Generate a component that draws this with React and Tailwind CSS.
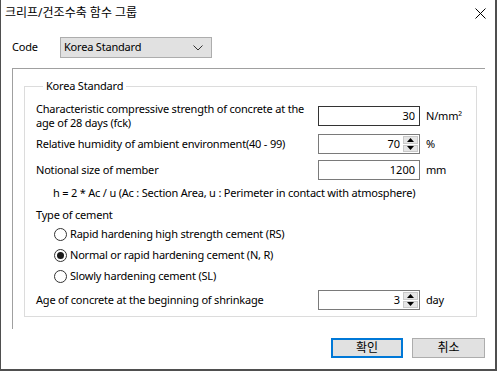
import React from 'react'

const font = "font-['Noto_Sans','Noto_Sans_CJK_KR',sans-serif]"
const txt = 'text-[11px] tracking-[-0.2px] text-black'

function Spinner() {
  return (
    <div className="flex flex-col gap-[1px] py-[1px] pr-[1px]">
      <div className="flex h-[8px] w-[15px] items-center justify-center border border-[#c9c9c9] bg-[#e5e5e5]">
        <svg width="7" height="4" viewBox="0 0 7 4"><path d="M3.5 0 L7 4 L0 4 Z" fill="#000" /></svg>
      </div>
      <div className="flex h-[8px] w-[15px] items-center justify-center border border-[#c9c9c9] bg-[#e5e5e5]">
        <svg width="7" height="4" viewBox="0 0 7 4"><path d="M0 0 L7 0 L3.5 4 Z" fill="#000" /></svg>
      </div>
    </div>
  )
}

function Field({ value, spin, focused }) {
  return (
    <div
      className={`flex h-[20px] w-[102px] items-stretch border bg-white ${
        focused ? 'border-[#333333]' : 'border-[#7a7a7a]'
      }`}
    >
      <input
        readOnly
        value={value}
        className={`min-w-0 flex-1 bg-transparent text-right text-[11px] text-black outline-none ${spin ? 'pr-[3px]' : 'pr-[4px]'}`}
      />
      {spin && <Spinner />}
    </div>
  )
}

function Row({ label, value, unit, spin, focused, h = 'h-[22px]' }) {
  return (
    <div className={`flex items-center ${h}`}>
      <div className={`w-[282px] whitespace-nowrap leading-[14px] ${txt}`}>{label}</div>
      <Field value={value} spin={spin} focused={focused} />
      <div className={`pl-[6px] ${txt}`}>{unit}</div>
    </div>
  )
}

function Radio({ label, checked }) {
  return (
    <div className="flex h-[21px] items-center pl-[18px]">
      <div className="flex h-[13px] w-[13px] items-center justify-center rounded-full border border-[#333333] bg-white">
        {checked && <div className="h-[7px] w-[7px] rounded-full bg-[#1a1a1a]" />}
      </div>
      <span className={`pl-[3px] ${txt}`}>{label}</span>
    </div>
  )
}

export default function App() {
  return (
    <div className={`${font} h-[372px] w-[497px] overflow-hidden bg-white`}>
      <div className="h-[371px] w-[497px] border-b-2 border-l border-r-2 border-[#4f4f4f] bg-white">
        {/* title bar */}
        <div className="flex h-[30px] items-center justify-between pb-[4px] pl-[4px] pr-[9px]">
          <span className="text-[12px] text-black">크리프/건조수축 함수 그룹</span>
          <svg width="11" height="11" viewBox="0 0 11 11">
            <path d="M0.5 0.5 L10.5 10.5 M10.5 0.5 L0.5 10.5" stroke="#000" strokeWidth="1" />
          </svg>
        </div>

        {/* code row */}
        <div className="mt-[7px] flex items-center pl-[11px]">
          <span className={`w-[48px] ${txt}`}>Code</span>
          <div className="flex h-[21px] w-[152px] items-center justify-between border border-[#adadad] bg-[#e1e1e1] pl-[3px] pr-[8px]">
            <span className={txt}>Korea Standard</span>
            <svg width="10" height="6" viewBox="0 0 10 6">
              <path d="M0.5 0.5 L5 5 L9.5 0.5" fill="none" stroke="#333" strokeWidth="1" />
            </svg>
          </div>
        </div>

        {/* outer frame */}
        <div className="ml-[11px] mt-[10px] h-[261px] w-[473px] border-l border-t border-[#a0a0a0] pl-[11px]">
          <fieldset className="mt-[9px] h-[239px] w-[453px] border border-[#dcdcdc] px-[11px]">
            <legend className={`ml-[7px] px-[3px] leading-[16px] ${txt}`}>Korea Standard</legend>
            <div className="flex flex-col pt-[8px]">
              <Row
                h="h-[28px]"
                label={
                  <>
                    Characteristic compressive strength of concrete at the
                    <br />
                    age of 28 days (fck)
                  </>
                }
                value="30"
                unit="N/mm²"
                focused
              />
              <div className="mt-[3px]">
                <Row label="Relative humidity of ambient environment(40 - 99)" value="70" unit="%" spin />
              </div>
              <div className="mt-[4px]">
                <Row label="Notional size of member" value="1200" unit="mm" />
              </div>
              <div className={`mt-[4px] flex h-[16px] items-center whitespace-nowrap pl-[17px] ${txt}`}>
                h = 2 * Ac / u (Ac : Section Area, u : Perimeter in contact with atmosphere)
              </div>
              <div className={`mt-[6px] flex h-[16px] items-center ${txt}`}>Type of cement</div>
              <div className="mt-[1px]">
                <Radio label="Rapid hardening high strength cement (RS)" />
                <Radio label="Normal or rapid hardening cement (N, R)" checked />
                <Radio label="Slowly hardening cement (SL)" />
              </div>
              <div className="mt-[2px]">
                <Row label="Age of concrete at the beginning of shrinkage" value="3" unit="day" spin />
              </div>
            </div>
          </fieldset>
        </div>

        {/* buttons */}
        <div className="mt-[9px] flex justify-end gap-[9px] pr-[10px]">
          <button className="flex h-[20px] w-[72px] items-center justify-center border-2 border-[#0078d7] bg-[#e1e1e1] text-[12px] text-black">
            확인
          </button>
          <button className="flex h-[20px] w-[73px] items-center justify-center border border-[#adadad] bg-[#e1e1e1] text-[12px] text-black">
            취소
          </button>
        </div>
      </div>
    </div>
  )
}
